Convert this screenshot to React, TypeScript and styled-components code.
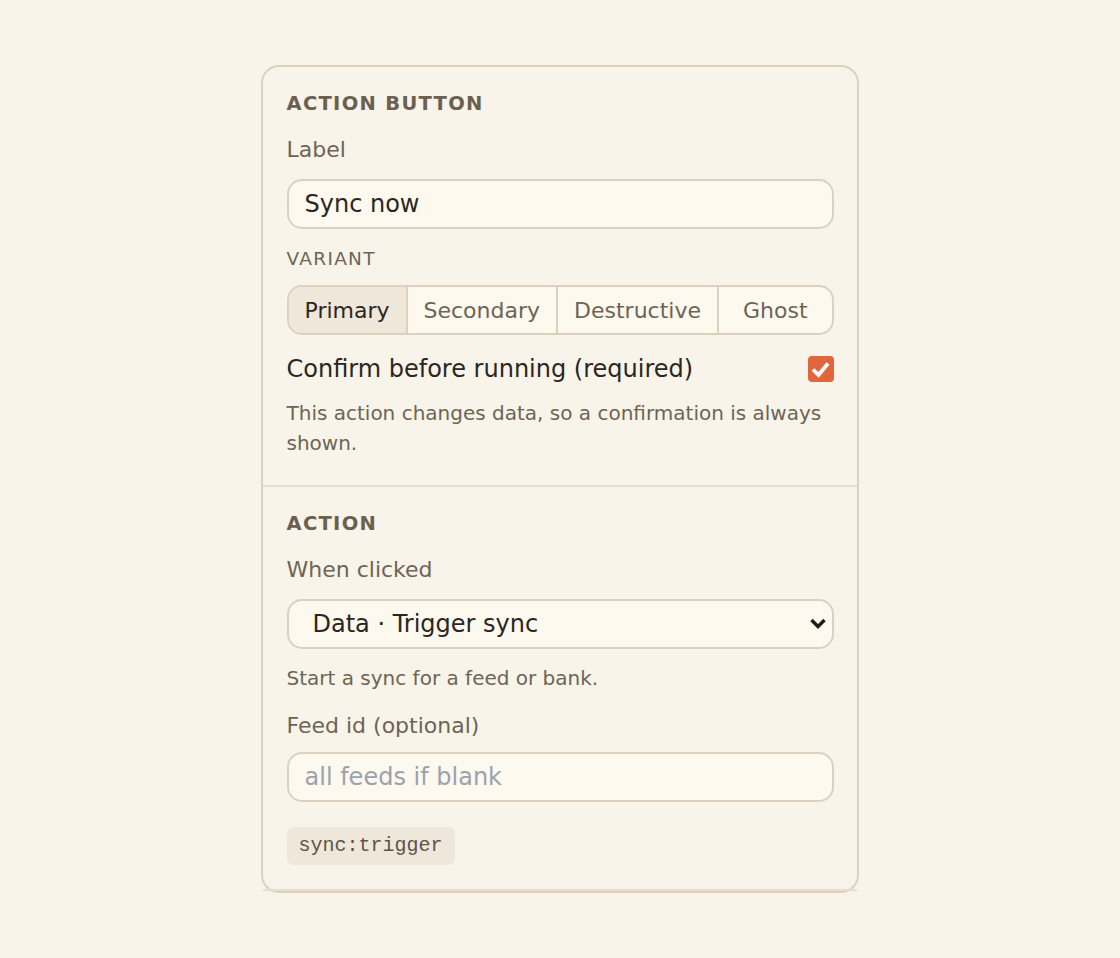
import React, { useState } from 'react';
import styled, { createGlobalStyle } from 'styled-components';

const GlobalStyle = createGlobalStyle`
  html, body {
    margin: 0;
    background: #f8f4ea;
    font-family: "DejaVu Sans", "Liberation Sans", sans-serif;
  }
  * { box-sizing: border-box; }
`;

const Page = styled.div`
  display: flex;
  justify-content: center;
  padding-top: 65px;
  min-height: 958px;
`;

const Card = styled.div`
  width: 598px;
  background: #f8f4ea;
  border: 2px solid #ddd1be;
  border-radius: 18px;
  align-self: flex-start;
`;

const Section = styled.section`
  display: flex;
  flex-direction: column;
  gap: 18px;
  padding: 24px 23.5px 27px;
  border-bottom: 2px solid #e7ddcd;

  &:last-child {
    padding-top: 24px;
    padding-bottom: 24px;
  }
`;

const Title = styled.h3`
  margin: 1px 0 2px;
  font-size: 19.5px;
  line-height: 24px;
  font-weight: 700;
  letter-spacing: 1.3px;
  color: #6b6050;
  text-transform: uppercase;
`;

const Field = styled.div<{ $gap?: number }>`
  display: flex;
  flex-direction: column;
  gap: ${(p) => p.$gap ?? 15}px;
`;

const Label = styled.label`
  font-size: 22px;
  line-height: 28px;
  color: #6e6455;
`;

const SmallCaps = styled.div`
  font-size: 18.5px;
  line-height: 24px;
  letter-spacing: 1.3px;
  color: #6e6455;
  text-transform: uppercase;
`;

const TextInput = styled.input`
  height: 50px;
  width: 100%;
  padding: 0 16px;
  border: 2px solid #ddd1be;
  border-radius: 15px;
  background: #fdf9ef;
  font-family: inherit;
  font-size: 24px;
  color: #2b2622;
  outline: none;

  &::placeholder {
    color: #9ba2ad;
  }
`;

const Segmented = styled.div`
  display: flex;
  height: 50px;
  border: 2px solid #ddd1be;
  border-radius: 15px;
  overflow: hidden;
  background: #fdf9ef;
`;

const Segment = styled.button<{ $active?: boolean }>`
  flex: 0 0 auto;
  padding: 0 16px;
  border: none;
  border-left: 2px solid #ddd1be;
  background: ${(p) => (p.$active ? '#efe7da' : 'transparent')};
  color: ${(p) => (p.$active ? '#2b2622' : '#6e6455')};
  font-family: inherit;
  font-size: 22px;
  cursor: pointer;

  &:first-child {
    border-left: none;
  }
  &:last-child {
    flex: 1 1 auto;
  }
`;

const ToggleBlock = styled.div`
  display: flex;
  flex-direction: column;
  gap: 14px;
`;

const ToggleRow = styled.label`
  display: flex;
  align-items: center;
  justify-content: space-between;
  height: 32px;
  font-size: 24px;
  color: #2b2622;
  cursor: pointer;
`;

const Box = styled.span<{ $checked: boolean }>`
  display: flex;
  align-items: center;
  justify-content: center;
  width: 26px;
  height: 26px;
  border-radius: 4px;
  background: ${(p) => (p.$checked ? '#e1653d' : '#fdf9ef')};
  border: ${(p) => (p.$checked ? 'none' : '2px solid #ddd1be')};
`;

const Hint = styled.p`
  margin: 0;
  font-size: 20px;
  line-height: 29.5px;
  color: #6e6455;
`;

const SelectWrap = styled.div`
  position: relative;
  height: 50px;
`;

const Select = styled.select`
  appearance: none;
  width: 100%;
  height: 50px;
  padding: 0 50px 0 24px;
  border: 2px solid #ddd1be;
  border-radius: 15px;
  background: #fdf9ef;
  font-family: inherit;
  font-size: 24px;
  color: #2b2622;
  outline: none;
`;

const Chevron = styled.svg`
  position: absolute;
  right: 7px;
  top: 18px;
  pointer-events: none;
`;

const Chip = styled.code`
  align-self: flex-start;
  margin-top: 7px;
  height: 38px;
  padding: 0 12px;
  display: flex;
  align-items: center;
  border-radius: 7px;
  background: #efe7da;
  font-family: "Liberation Mono", "DejaVu Sans Mono", monospace;
  font-size: 20px;
  color: #5e5548;
`;

const variants = ['Primary', 'Secondary', 'Destructive', 'Ghost'];

export default function App() {
  const [variant, setVariant] = useState('Primary');
  const [confirm, setConfirm] = useState(true);
  const [label, setLabel] = useState('Sync now');

  return (
    <>
      <GlobalStyle />
      <Page>
        <Card>
          <Section>
            <Title>Action button</Title>
            <Field>
              <Label>Label</Label>
              <TextInput value={label} onChange={(e) => setLabel(e.target.value)} />
            </Field>
            <Field $gap={14}>
              <SmallCaps>Variant</SmallCaps>
              <Segmented>
                {variants.map((v) => (
                  <Segment key={v} $active={v === variant} onClick={() => setVariant(v)}>
                    {v}
                  </Segment>
                ))}
              </Segmented>
            </Field>
            <ToggleBlock>
              <ToggleRow onClick={() => setConfirm(!confirm)}>
                Confirm before running (required)
                <Box $checked={confirm}>
                  {confirm && (
                    <svg width="26" height="26" viewBox="0 0 26 26">
                      <path d="M5 13.5 L10.5 19 L20 7.5" fill="none" stroke="#fff" strokeWidth="3.8" />
                    </svg>
                  )}
                </Box>
              </ToggleRow>
              <Hint>This action changes data, so a confirmation is always shown.</Hint>
            </ToggleBlock>
          </Section>
          <Section>
            <Title>Action</Title>
            <Field>
              <Label>When clicked</Label>
              <SelectWrap>
                <Select defaultValue="sync">
                  <option value="sync">Data · Trigger sync</option>
                  <option value="refresh">Data · Refresh view</option>
                </Select>
                <Chevron width="18" height="14" viewBox="0 0 18 14">
                  <path d="M2.5 3 L9 9.5 L15.5 3" fill="none" stroke="#1f1b18" strokeWidth="3.4" />
                </Chevron>
              </SelectWrap>
              <Hint>Start a sync for a feed or bank.</Hint>
            </Field>
            <Field $gap={12}>
              <Label>Feed id (optional)</Label>
              <TextInput placeholder="all feeds if blank" />
            </Field>
            <Chip>sync:trigger</Chip>
          </Section>
        </Card>
      </Page>
    </>
  );
}
